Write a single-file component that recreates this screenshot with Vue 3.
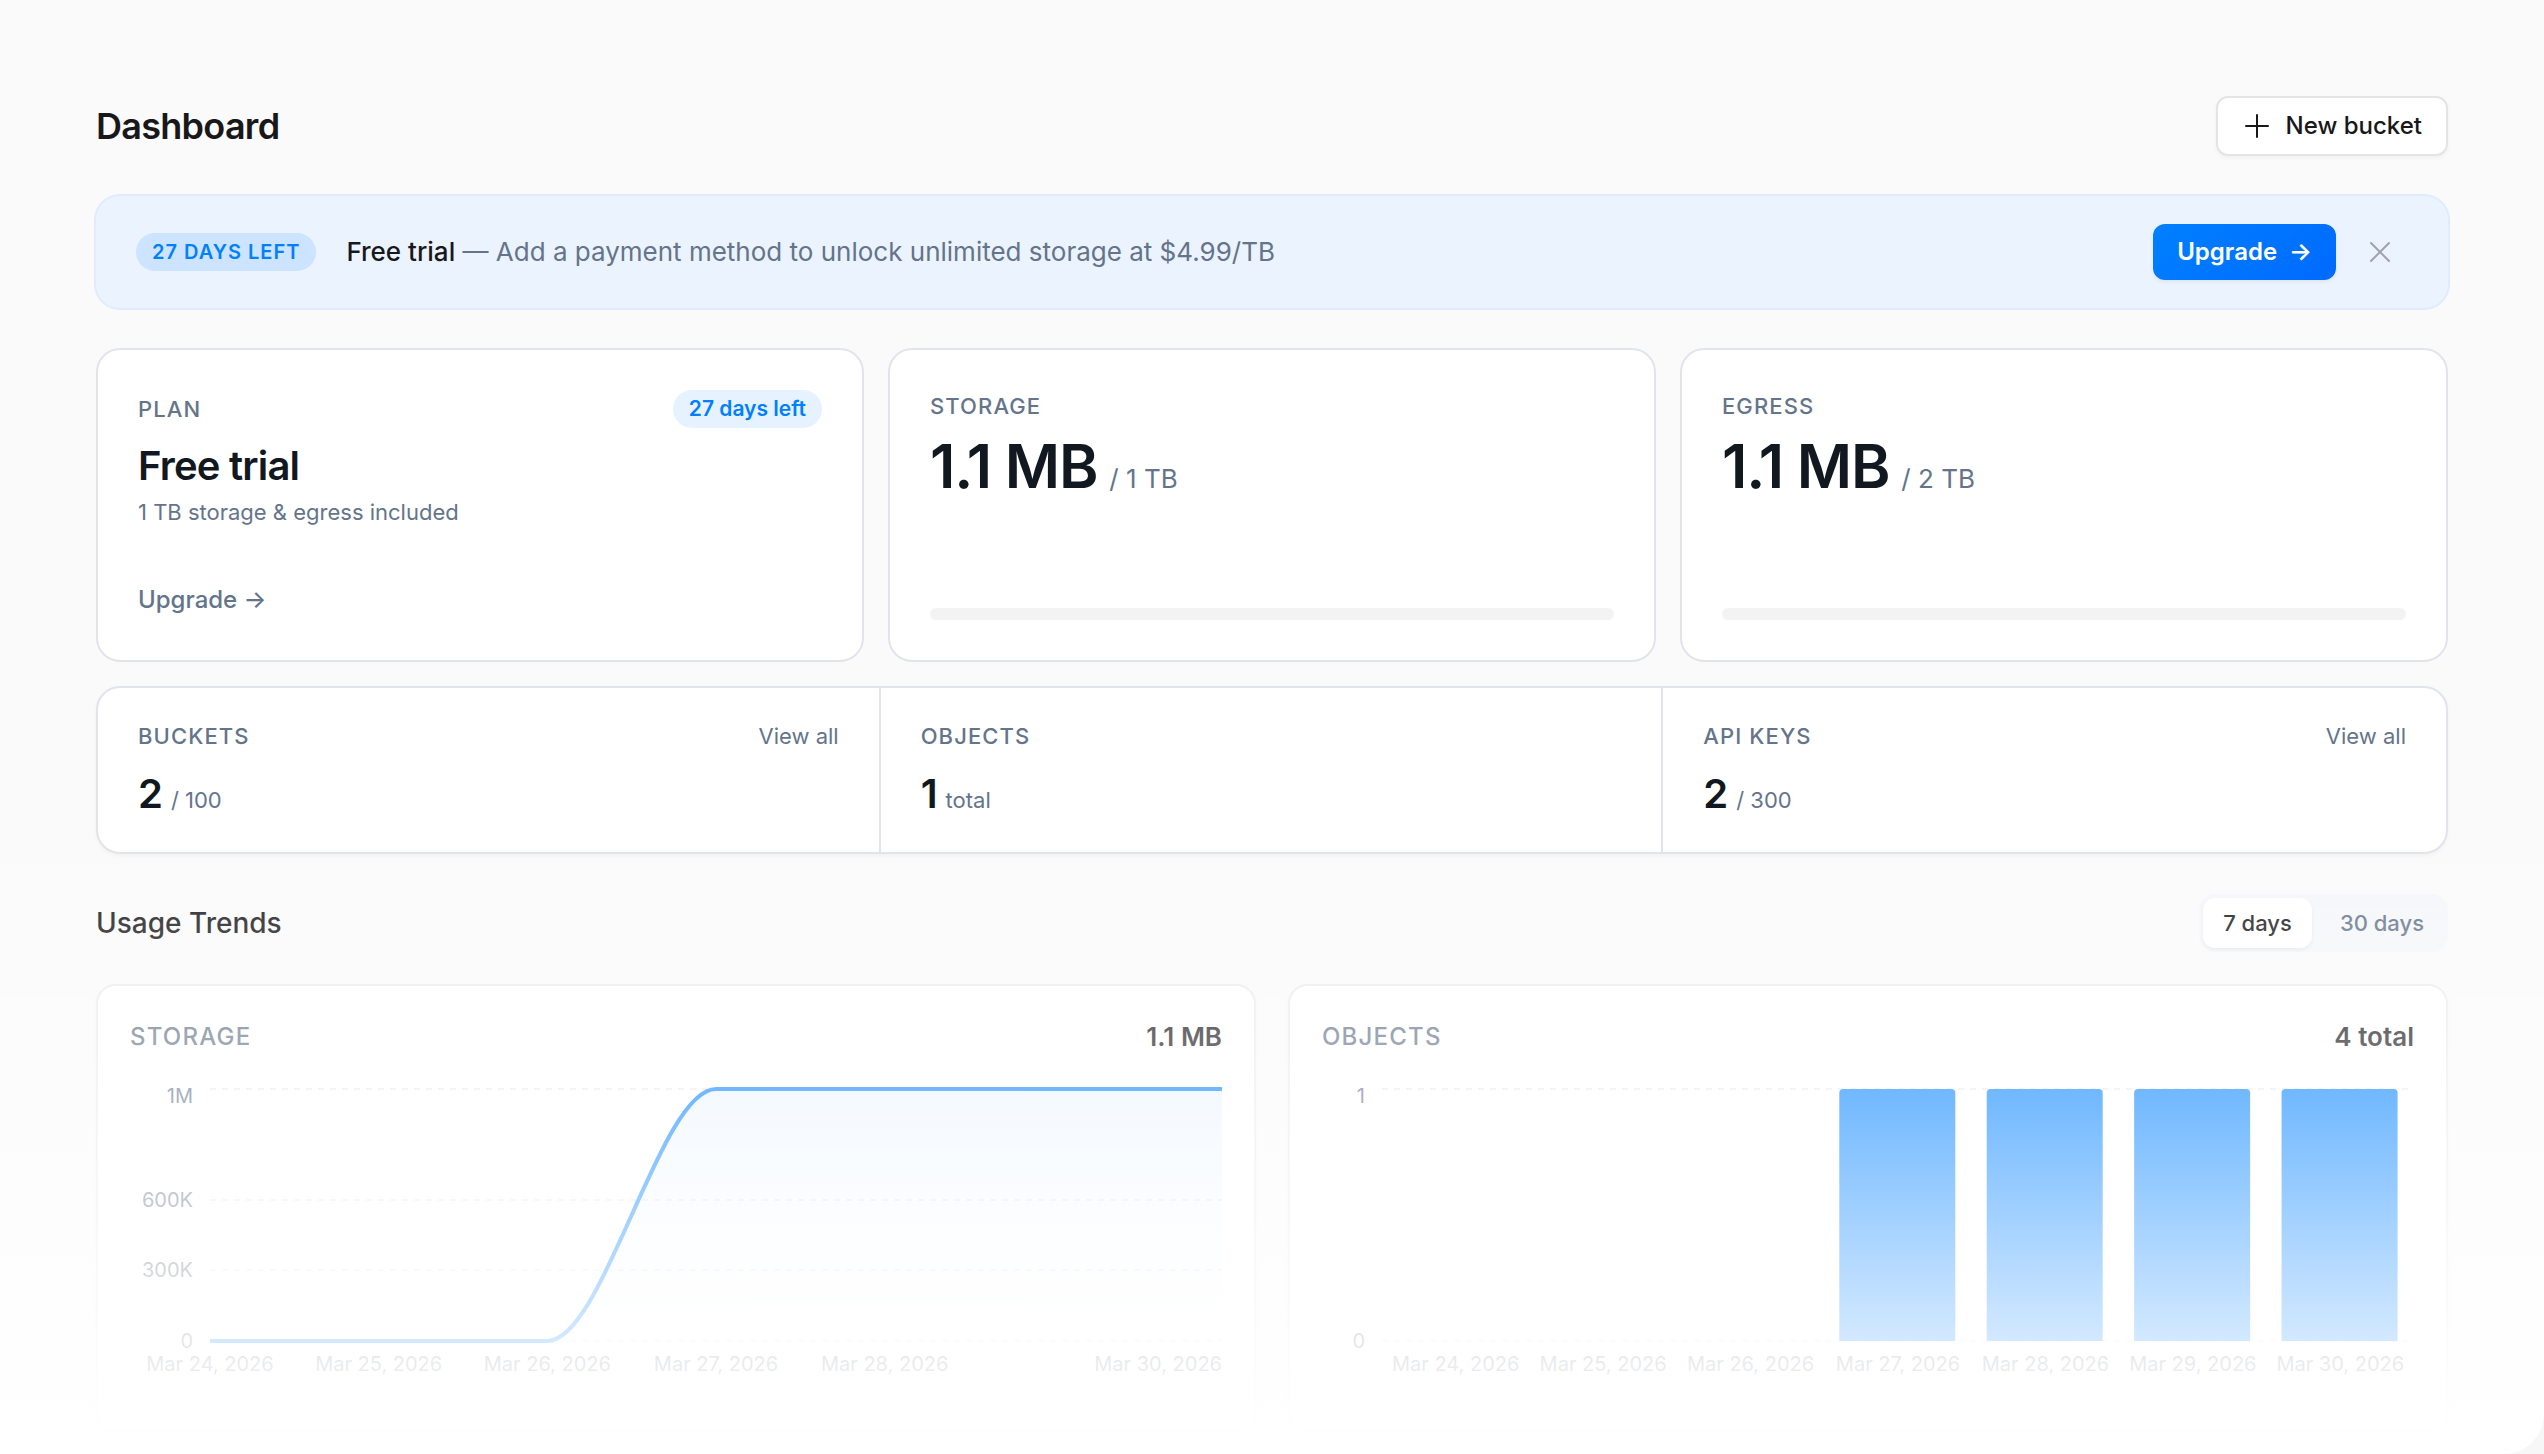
<script setup>
import { ref } from 'vue'

const bannerOpen = ref(true)
const range = ref('7')

const meters = [
  { label: 'Storage', used: '1.1 MB', limit: '/ 1 TB' },
  { label: 'Egress', used: '1.1 MB', limit: '/ 2 TB' },
]

const counts = [
  { label: 'Buckets', value: '2', unit: '/ 100', link: true },
  { label: 'Objects', value: '1', unit: 'total', link: false },
  { label: 'API keys', value: '2', unit: '/ 300', link: true },
]

const days = [24, 25, 26, 27, 28, 29, 30].map((d) => `Mar ${d}, 2026`)

// Plot geometry shared by both charts, in viewBox units.
const W = 1092
const TOP = 11
const BASE = 263

// Storage line chart
const L = 80
const step = (W - L) / 6
const px = (i) => L + step * i
const third = step / 3
const line = `M${L} ${BASE}H${px(2)}C${px(2) + third} ${BASE} ${px(3) - third} ${TOP} ${px(3)} ${TOP}H${W}`
const area = `${line}V${BASE}H${L}Z`
const storageTicks = [
  { text: '1M', y: TOP, ty: 25 },
  { text: '600K', y: 122, ty: 129 },
  { text: '300K', y: 192, ty: 199 },
  { text: '0', y: BASE, ty: 270 },
]
const storageDays = [0, 1, 2, 3, 4, 6].map((i) => ({
  text: days[i],
  x: px(i),
  anchor: i === 6 ? 'end' : 'middle',
}))

// Objects bar chart
const BL = 60
const band = (W - BL) / 7
const objectTicks = [
  { text: '1', y: TOP, ty: 25 },
  { text: '0', y: BASE, ty: 270 },
]
const objects = [0, 0, 0, 1, 1, 1, 1].map((n, i) => {
  const x = BL + band * i + 15
  const y = BASE - n * (BASE - TOP)
  return {
    day: days[i],
    cx: BL + band * (i + 0.5),
    path: n
      ? `M${x} ${BASE}V${y + 4}q0 -4 4 -4h108q4 0 4 4V${BASE}Z`
      : '',
  }
})
</script>

<template>
  <main class="page">
    <header class="head">
      <h1>Dashboard</h1>
      <button class="btn-new" type="button">
        <svg width="32" height="32" viewBox="0 0 32 32" fill="none" stroke="currentColor" stroke-width="2" stroke-linecap="round" aria-hidden="true">
          <path d="M15 5v22M4 16h22" />
        </svg>
        New bucket
      </button>
    </header>

    <section v-if="bannerOpen" class="banner">
      <span class="pill pill-strong">27 days left</span>
      <p><strong>Free trial</strong> — Add a payment method to unlock unlimited storage at $4.99/TB</p>
      <button class="btn-upgrade" type="button">Upgrade <span>→</span></button>
      <button class="btn-close" type="button" aria-label="Dismiss" @click="bannerOpen = false">
        <svg width="24" height="24" viewBox="0 0 24 24" fill="none" stroke="currentColor" stroke-width="2" stroke-linecap="round" aria-hidden="true">
          <path d="M3 3l18 18M21 3L3 21" />
        </svg>
      </button>
    </section>

    <section class="cards">
      <article class="card">
        <div class="card-top">
          <h2 class="label">Plan</h2>
          <span class="pill pill-soft">27 days left</span>
        </div>
        <p class="plan">Free trial</p>
        <p class="note">1 TB storage &amp; egress included</p>
        <a class="upgrade" href="#">Upgrade →</a>
      </article>
      <article v-for="m in meters" :key="m.label" class="card">
        <h2 class="label">{{ m.label }}</h2>
        <p class="usage"><b>{{ m.used }}</b><span>{{ m.limit }}</span></p>
        <div class="meter"></div>
      </article>
    </section>

    <section class="counts">
      <div v-for="c in counts" :key="c.label" class="count">
        <div class="card-top">
          <h2 class="label">{{ c.label }}</h2>
          <a v-if="c.link" class="view" href="#">View all</a>
        </div>
        <p class="total"><b>{{ c.value }}</b><span>{{ c.unit }}</span></p>
      </div>
    </section>

    <section class="trends">
      <div class="trends-head">
        <h2>Usage Trends</h2>
        <div class="toggle">
          <button type="button" :class="{ on: range === '7' }" @click="range = '7'">7 days</button>
          <button type="button" :class="{ on: range === '30' }" @click="range = '30'">30 days</button>
        </div>
      </div>

      <div class="charts">
        <article class="chart">
          <div class="chart-head">
            <h3>Storage</h3>
            <b>1.1 MB</b>
          </div>
          <svg :viewBox="`0 0 ${W} 320`" role="img" aria-label="Storage over the last 7 days">
            <defs>
              <linearGradient id="area-fill" x1="0" y1="0" x2="0" y2="1">
                <stop offset="0" stop-color="#0080ff" stop-opacity="0.08" />
                <stop offset="1" stop-color="#0080ff" stop-opacity="0" />
              </linearGradient>
            </defs>
            <g v-for="t in storageTicks" :key="t.text">
              <line class="grid" :x1="L" :x2="W" :y1="t.y" :y2="t.y" />
              <text :x="L - 17" :y="t.ty" text-anchor="end">{{ t.text }}</text>
            </g>
            <path :d="area" fill="url(#area-fill)" />
            <path :d="line" fill="none" stroke="#0080ff" stroke-width="4" />
            <text v-for="d in storageDays" :key="d.text" :x="d.x" y="293" :text-anchor="d.anchor">{{ d.text }}</text>
          </svg>
        </article>

        <article class="chart">
          <div class="chart-head">
            <h3>Objects</h3>
            <b>4 total</b>
          </div>
          <svg :viewBox="`0 0 ${W} 320`" role="img" aria-label="Objects over the last 7 days">
            <g v-for="t in objectTicks" :key="t.text">
              <line class="grid" :x1="BL" :x2="W" :y1="t.y" :y2="t.y" />
              <text :x="BL - 17" :y="t.ty" text-anchor="end">{{ t.text }}</text>
            </g>
            <g v-for="o in objects" :key="o.day">
              <path v-if="o.path" :d="o.path" fill="#0080ff" />
              <text :x="o.cx" y="293" text-anchor="middle">{{ o.day }}</text>
            </g>
          </svg>
        </article>
      </div>
    </section>

    <div class="fade" aria-hidden="true"></div>
  </main>
</template>

<style>
html,
body {
  background: #f7f7f7;
}
</style>

<style scoped>
.page {
  position: relative;
  box-sizing: border-box;
  min-height: 100vh;
  padding: 96px 96px 22px;
  overflow: hidden;
  border-bottom-right-radius: 40px;
  background: #fafafa;
  color: #18181b;
  font-family: Inter, "Liberation Sans", sans-serif;
  font-size: 24px;
  line-height: 32px;
}
h1,
h2,
h3,
p {
  margin: 0;
  font-weight: 500;
}
button {
  padding: 0;
  border: 0;
  background: none;
  color: inherit;
  font: inherit;
  font-weight: 500;
  cursor: pointer;
}
a {
  color: #64748b;
  text-decoration: none;
}
svg {
  display: block;
}
.head {
  display: flex;
  align-items: center;
  justify-content: space-between;
}
h1 {
  font-size: 36px;
  line-height: 60px;
  font-weight: 600;
  letter-spacing: -0.02em;
}
.btn-new {
  display: flex;
  align-items: center;
  gap: 12px;
  height: 60px;
  padding: 0 24px;
  border: 2px solid #e4e4e7;
  border-radius: 12px;
  background: #fff;
  box-shadow: 0 2px 4px rgba(0, 0, 0, 0.04);
}
.banner {
  display: flex;
  align-items: center;
  height: 112px;
  margin-top: 40px;
  padding: 0 40px;
  border-radius: 24px;
  background: #ebf3fe;
  box-shadow: 0 0 0 2px #e0ecfe;
}
.banner p {
  flex: 1;
  margin-left: 30px;
  color: #64748b;
  font-size: 26px;
  font-weight: 400;
}
.banner strong {
  color: #18181b;
  font-weight: 500;
}
.pill {
  padding: 0 16px;
  border-radius: 19px;
  color: #0080ff;
  line-height: 38px;
  font-weight: 600;
}
.pill-soft {
  background: #e6f2ff;
  font-size: 21px;
}
.pill-strong {
  background: #cce4ff;
  font-size: 20px;
  letter-spacing: 0.05em;
  text-transform: uppercase;
}
.btn-upgrade {
  display: flex;
  align-items: center;
  gap: 12px;
  height: 56px;
  padding: 0 24px;
  border-radius: 12px;
  background: linear-gradient(135deg, #0080ff, #006aff);
  color: #fff;
  font-weight: 600;
  box-shadow: 0 2px 4px rgba(0, 0, 0, 0.06);
}
.btn-close {
  display: grid;
  place-items: center;
  width: 56px;
  height: 56px;
  margin-left: 16px;
  color: #a1a1aa;
}
.cards {
  display: grid;
  grid-template-columns: repeat(3, 1fr);
  gap: 24px;
  margin-top: 40px;
}
.card {
  display: flex;
  flex-direction: column;
  box-sizing: border-box;
  min-height: 314px;
  padding: 40px;
  border: 2px solid #e2e4ec;
  border-radius: 24px;
  background: #fff;
}
.card-top {
  display: flex;
  align-items: center;
  justify-content: space-between;
}
.label {
  color: #64748b;
  font-size: 22px;
  line-height: 32px;
  font-weight: 500;
  letter-spacing: 0.05em;
  text-transform: uppercase;
}
.plan {
  margin-top: 14px;
  color: #111820;
  font-size: 40px;
  line-height: 48px;
  font-weight: 600;
  letter-spacing: -0.02em;
}
.note {
  margin-top: 6px;
  color: #64748b;
  font-size: 22px;
  font-weight: 400;
}
.upgrade {
  margin-top: auto;
  margin-bottom: 4px;
  font-weight: 500;
}
.usage {
  display: flex;
  align-items: baseline;
  gap: 12px;
  margin-top: 14px;
  color: #64748b;
  font-size: 26px;
  font-weight: 400;
}
.usage b {
  color: #111820;
  font-size: 60px;
  line-height: 60px;
  font-weight: 600;
  letter-spacing: -0.02em;
}
.meter {
  height: 12px;
  margin-top: auto;
  border-radius: 6px;
  background: #f3f3f3;
}
.counts {
  display: grid;
  grid-template-columns: repeat(3, 1fr);
  margin-top: 24px;
  border: 2px solid #e2e4ec;
  border-radius: 24px;
  background: #fff;
  box-shadow: 0 2px 4px rgba(0, 0, 0, 0.04);
}
.count {
  padding: 32px 40px 34px;
  border-right: 2px solid #e2e4ec;
}
.count:last-child {
  border-right: 0;
}
.view {
  font-size: 22px;
}
.total {
  display: flex;
  align-items: baseline;
  gap: 8px;
  margin-top: 18px;
  color: #64748b;
  font-size: 22px;
  font-weight: 400;
}
.total b {
  color: #111820;
  font-size: 40px;
  line-height: 48px;
  font-weight: 600;
}
.trends {
  margin-top: 40px;
}
.trends-head {
  display: flex;
  align-items: center;
  justify-content: space-between;
}
.trends-head h2 {
  font-size: 28px;
}
.toggle {
  display: flex;
  gap: 8px;
  padding: 4px;
  border-radius: 16px;
  background: #f4f6f9;
}
.toggle button {
  padding: 0 20px;
  border-radius: 12px;
  color: #64748b;
  font-size: 22px;
  line-height: 50px;
}
.toggle .on {
  background: #fff;
  color: #18181b;
  box-shadow: 0 2px 4px rgba(0, 0, 0, 0.06);
}
.charts {
  display: grid;
  grid-template-columns: repeat(2, 1fr);
  gap: 32px;
  margin-top: 32px;
}
.chart {
  padding: 32px;
  border: 2px solid #ececee;
  border-radius: 20px;
  background: #fff;
  box-shadow: 0 2px 4px rgba(0, 0, 0, 0.03);
}
.chart-head {
  display: flex;
  align-items: center;
  justify-content: space-between;
  margin-bottom: 22px;
  line-height: 38px;
}
.chart-head h3 {
  color: #64748b;
  font-size: 24px;
  letter-spacing: 0.05em;
  text-transform: uppercase;
}
.chart-head b {
  font-size: 26px;
  font-weight: 600;
}
.chart svg {
  width: 100%;
  height: auto;
}
.chart text {
  fill: #64708a;
  font-size: 20px;
}
.grid {
  stroke: #ececec;
  stroke-width: 2;
  stroke-dasharray: 6 6;
}
.fade {
  position: absolute;
  right: 0;
  bottom: 0;
  left: 0;
  height: 590px;
  background: linear-gradient(to bottom, rgba(255, 255, 255, 0.1), rgba(255, 255, 255, 0.44) 38%, rgba(255, 255, 255, 0.82) 80%, #fff);
  pointer-events: none;
}
</style>
